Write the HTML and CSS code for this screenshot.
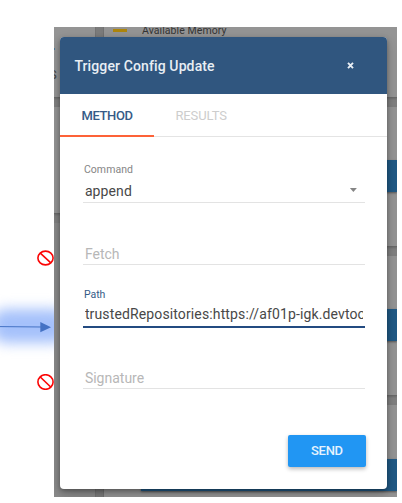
FILE: index.html
```html
<!DOCTYPE html>
<html lang="en">
<head>
<meta charset="utf-8">
<title>Trigger Config Update</title>
<link rel="stylesheet" href="styles.css">
</head>
<body>
<main class="page">
  <aside class="notes">
    <svg class="ban" viewBox="0 0 17 16"><ellipse cx="8.5" cy="8" rx="7.6" ry="6.9"/><path d="M3.3 3.2L13.8 12.8"/></svg>
    <div class="pointer">
      <svg class="arrow" viewBox="0 0 54 12"><path class="shaft" d="M0 5.6L42 6"/><path class="head" d="M40.3 1L51 6.2L40.3 11.2Z"/></svg>
    </div>
    <svg class="ban" viewBox="0 0 17 16"><ellipse cx="8.5" cy="8" rx="7.6" ry="7.3"/><path d="M3.3 3L13.7 13"/></svg>
  </aside>
  <section class="screen">
    <div class="board">
      <div class="column side">
        <div class="card top"><span class="tick"></span><span class="cut">S</span></div>
        <div class="card short"></div>
        <div class="rest"></div>
      </div>
      <div class="gutter"></div>
      <div class="column">
        <div class="card top"><span class="swatch"></span><span class="legend">Available Memory</span></div>
        <div class="card tall"><div class="action"></div></div>
        <div class="card tall"><div class="action"></div></div>
        <div class="card tall last"><div class="action"></div></div>
      </div>
    </div>
    <div class="dialog">
      <header class="titlebar"><h1>Trigger Config Update</h1><svg class="close" viewBox="0 0 7 7"><path d="M1 .8L6 6.2M6 .8L1 6.2"/></svg></header>
      <nav class="tabs"><span class="tab active">METHOD</span><span class="tab results">RESULTS</span></nav>
      <form class="form">
        <div class="field command"><span class="label">Command</span><div class="value"><span class="append">append</span><span class="caret"></span></div></div>
        <div class="field fetch"><div class="value"><span class="fetch-text">Fetch</span></div></div>
        <div class="field path"><span class="label">Path</span><div class="value"><span class="clip">trustedRepositories:https://af01p-igk.devtoo</span></div></div>
        <div class="field signature"><div class="value"><span class="sign-text">Signature</span></div></div>
        <div class="send">SEND</div>
      </form>
    </div>
  </section>
</main>
</body>
</html>
```
FILE: styles.css
```css
* { box-sizing: border-box; }
body { margin: 0; background: #fff; font-family: Roboto, sans-serif; }
.page { display: flex; width: 402px; height: 503px; padding-top: 27px; overflow: hidden; }
svg { display: block; fill: none; }

.notes { width: 54px; height: 470px; padding-top: 222.5px; overflow: hidden; }
.ban { width: 17px; height: 16px; margin-left: 37px; stroke: #fb0505; stroke-width: 1.6; }
.pointer { display: flex; align-items: center; height: 44px; margin: 39.5px 0 25px; position: relative; }
.pointer::before { content: ""; position: absolute; left: -8px; top: 4px; width: 76px; height: 34px; border-radius: 14px; background: #a5c1fb; filter: blur(6.5px); }
.arrow { width: 54px; height: 12px; position: relative; }
.shaft { stroke: #4472c4; stroke-width: 1; }
.head { fill: #4472c4; }

.screen { display: grid; grid-template: 470px / 343px; width: 343px; height: 470px; overflow: hidden; background: #808080; }
.board, .dialog { grid-area: 1 / 1; }
.board { display: grid; grid-template-columns: 41px 9px 293px; height: 470px; }
.gutter { background: #7c7c7c; border-right: 1px solid #747474; border-left: 1px solid #747474; }
.column { display: flex; flex-direction: column; gap: 9px; min-width: 0; }
.card { flex: none; background: #949494; border-bottom: 1px solid #6a6a6a; box-shadow: 0 1px 2px #6c6c6c; }
.top { display: flex; height: 71px; }
.side .top { flex-direction: column; }
.short { height: 107px; }
.rest { flex: 1; background: #8a8a8a; }
.tick { width: 1px; height: 2px; margin-top: 21px; background: #4b7897; }
.cut { margin: 17px 0 0 -5px; font-size: 13px; line-height: 16px; color: #444; }
.swatch { width: 14px; height: 3px; margin: 2px 0 0 9px; background: #ad850c; }
.legend { margin: -3px 0 0 15px; font-size: 10.5px; line-height: 14px; letter-spacing: .08px; color: #343434; white-space: nowrap; }
.tall { height: 140px; padding: 53px 0 0 37px; }
.last { border: 0; padding-top: 54px; }
.action { height: 32px; background: #205985; box-shadow: 0 1px 2px #555; }

.dialog { width: 327px; height: 452px; margin: 10px 0 0 6.4px; border-radius: 4px; background: #fff; overflow: hidden; position: relative; box-shadow: 0 2px 5px rgba(0,0,0,.34), 0 6px 14px rgba(0,0,0,.16); }
.titlebar { display: flex; align-items: center; justify-content: space-between; height: 57px; padding: 0 33.5px 0 14px; background: #30567f; color: #e8eef4; }
h1 { margin: 1px 0 0; font-size: 14px; line-height: 20px; font-weight: 500; letter-spacing: .12px; white-space: nowrap; }
.close { width: 7px; height: 7px; stroke: #e8eef4; stroke-width: 1.9; }
.tabs { display: flex; height: 43px; border-bottom: 1px solid #e4e4e4; font-size: 13px; line-height: 43px; }
.tab { width: 94px; height: 43px; padding-left: 21px; color: #cdcdcd; }
.results { letter-spacing: -.1px; }
.active { color: #365b87; font-weight: 500; letter-spacing: -.35px; border-bottom: 2px solid #fd6238; }
.form { display: flex; flex-direction: column; margin: 0 22.5px; }
.field { display: flex; flex-direction: column; justify-content: flex-end; border-bottom: 1px solid #e3e3e3; color: #b7b7b7; }
.label { padding-left: 1px; font-size: 10.5px; line-height: 14px; color: #858585; }
.value { display: flex; justify-content: space-between; height: 21px; padding: 0 2px; font-size: 14px; line-height: 20px; }
.command { height: 66px; }
.command .label { margin-bottom: 4px; letter-spacing: .08px; }
.append { color: #484848; letter-spacing: .1px; }
.caret { width: 7px; height: 4px; margin: 7px 6px 0 0; background: #858585; clip-path: polygon(0 0, 100% 0, 50% 100%); }
.fetch { height: 62px; }
.fetch .value, .signature .value { height: 20px; }
.path { height: 63px; border-bottom: 2px solid #234b81; color: #484848; }
.path .value { height: 22px; }
.path .label { margin-bottom: 2px; color: #365b87; }
.clip { width: 279px; overflow: hidden; white-space: nowrap; letter-spacing: .13px; }
.signature { height: 61px; }
.send { align-self: flex-end; width: 78px; height: 32px; margin: 46px -1px 0 0; border-radius: 2px; background: #2196f3; box-shadow: 0 2px 4px rgba(0,0,0,.28); color: #e6f3fe; font-size: 13px; font-weight: 500; letter-spacing: -.25px; line-height: 32px; text-align: center; }
```
